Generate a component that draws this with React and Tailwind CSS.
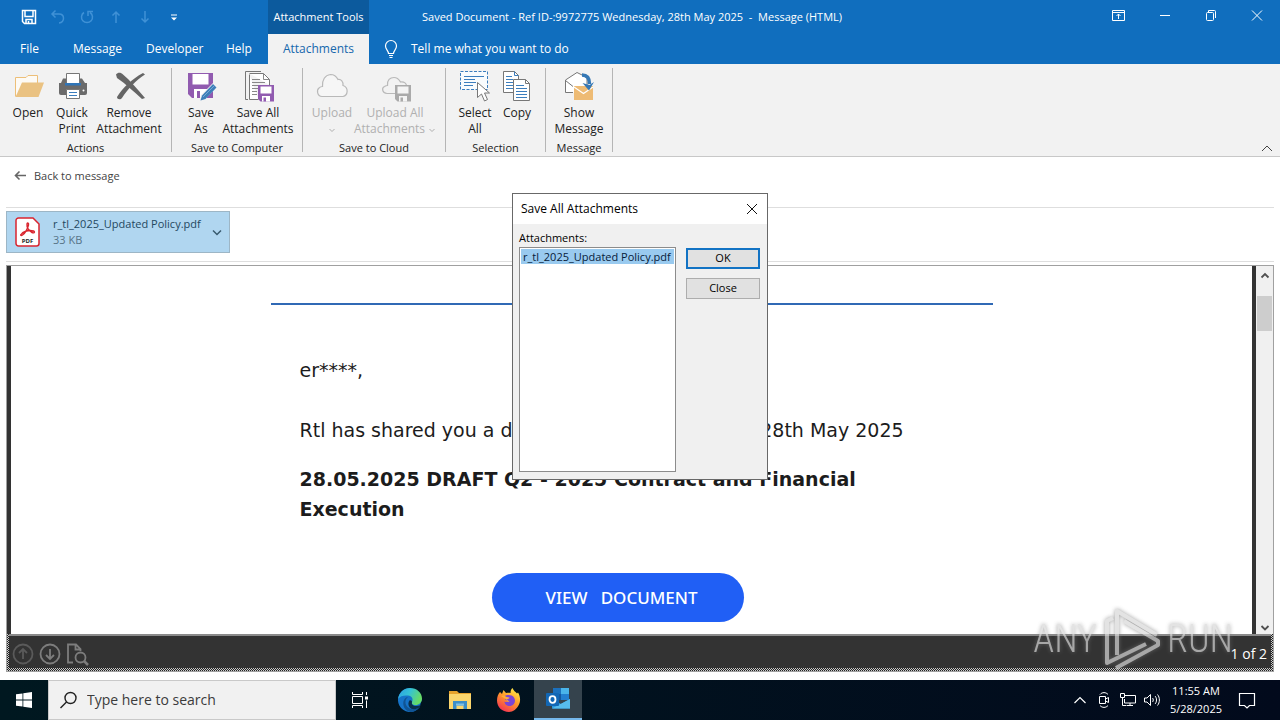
import React from 'react';

const FloppySmall = ({ x, y, color, paper = '#fff' }) => (
    <g transform={`translate(${x} ${y})`}>
        <path d="M0 0h16v16.5H2.5L0 14z" fill={color} />
        <path d="M2.5 1.5h11v7h-11z" fill={paper} />
        <path d="M4 11h8v5.5H4z" fill={paper} />
        <path d="M5.5 12.5H8v4H5.5z" fill={color} />
    </g>
);

const OpenIcon = () => (
    <svg className="size-8" viewBox="0 0 32 32" fill="none">
        <path d="M3.5 26.500V7.500H14l2-2h9.500v8" fill="#fdfaf5" stroke="#edbf78" />
        <path d="M10 12.500h22L26.500 27H3.500z" fill="#eac282" />
    </svg>
);

const PrinterIcon = () => (
    <svg className="size-8" viewBox="0 0 32 32" fill="none">
        <path d="M3 13h28v10a2 2 0 0 1-2 2H5a2 2 0 0 1-2-2z" fill="#6b6b6b" />
        <path d="M7 8.500h3V13H5z M22 8.500h4L29 13h-7z" fill="#6b6b6b" />
        <path d="M10.500 3.500h13V14h-13z" fill="#fff" stroke="#777" />
        <path d="M9 13h16v2.500H9z" fill="#2f75b8" />
        <path d="M10.500 19.500h13v9h-13z" fill="#fff" stroke="#777" />
        <path d="M13 22.500h8M13 25.500h8" stroke="#3b7dbd" />
        <circle cx="27.500" cy="20.500" r="1" fill="#fff" />
    </svg>
);

const RemoveIcon = () => (
    <svg className="size-8" viewBox="0 0 32 32">
        <path d="M3 4.500C5 2 8 2.500 10 4.500c7 6 14 14 22 23.500l-3 1C21 22 13 14 4 8z" fill="#656565" />
        <path d="M32 4.500C23 10.500 15 18.500 9 28c-1.500 2-5 1.500-5-1C10 17.500 19 9 30 3z" fill="#656565" />
    </svg>
);

const SaveAsIcon = () => (
    <svg className="size-8" viewBox="0 0 32 32">
        <path d="M3 3h25v25H7l-4-4z" fill="#915bb0" />
        <path d="M7.500 4h16v10.500h-16z" fill="#fff" />
        <path d="M9 19h13v9H9z" fill="#fff" />
        <path d="M12 21h3v7h-3z" fill="#915bb0" />
        <path d="M14 31.500l2-6.500L28.500 12.500l4 4L20 29z" fill="#f2f2f2" />
        <path d="M15.500 30.500l1.500-5L28 14l3.500 3.500L20.500 29z" fill="#3e7fb9" />
        <path d="M18 27L29 16" stroke="#76a9d4" />
    </svg>
);

const SaveAllIcon = () => (
    <svg className="size-8" viewBox="0 0 32 32" fill="none">
        <path d="M6 29.500H3.500v-28H19" stroke="#777" />
        <path d="M7.500 4.500v25h9M7.500 3.500h14l6 6V15" fill="#fff" stroke="#777" />
        <path d="M21.500 3.500v6h6M10 9.500h8M10 12.500h13M10 15.500h13M10 18.500h6M10 21.500h5M10 24.500h5" stroke="#888" />
        <FloppySmall x={16} y={15} color="#915bb0" />
    </svg>
);

const CloudIcon = () => (
    <svg className="size-8" viewBox="0 0 32 32" fill="none">
        <path
            d="M6 26.500C1 26 .5 20 3 18c1-1 2-1.500 3.500-1.500C6 10 9 5 14.500 4.500c4 0 6 2 7.500 5 3-.5 5.500 2 5 6 6 2 5 10 0 11z"
            fill="#f6f6f6"
            stroke="#b9b9b9"
            strokeWidth="1.200"
        />
    </svg>
);

const UploadAllIcon = () => (
    <svg className="size-8" viewBox="0 0 32 32" fill="none">
        <path
            d="M8 23.500C3 23 2.500 18 5.500 16.500c1-.7 1.500-1 3-1C8 10 11 7.500 15 7.500c4 0 5 2 6.500 4.500 4-.5 6 1.500 6 4"
            stroke="#b9b9b9"
            strokeWidth="1.200"
        />
        <path d="M8 23.500h9" stroke="#b9b9b9" />
        <FloppySmall x={16} y={15} color="#aaaaaa" paper="#f4f4f4" />
    </svg>
);

const SelectAllIcon = () => (
    <svg className="size-8" viewBox="0 0 32 32" fill="none">
        <path d="M1.500 1.500h27v18h-27z" fill="#f8fbfd" stroke="#3b7dbd" strokeDasharray="3 1.500" />
        <path d="M5 6.500h20M5 9.500h11M5 12.500h12M5 15.500h9" stroke="#3b7dbd" />
        <path d="M18.500 12.500v15l4-3.500 3 7 3-1.500-3-6.500h5z" fill="#fff" stroke="#777" />
    </svg>
);

const CopyIcon = () => (
    <svg className="size-8" viewBox="0 0 32 32" fill="none">
        <path d="M2.500 1.500h11l4 4v17h-15z" fill="#fff" stroke="#777" />
        <path d="M13.500 1.500v4h4M5 6.500h6M5 9.500h7M5 12.500h7M5 15.500h7M5 18.500h7" stroke="#3b7dbd" />
        <path d="M12.500 9.500h12l4 4v17h-16z" fill="#fff" stroke="#777" />
        <path d="M24.500 9.500v4h4" stroke="#777" />
        <path d="M15 15.500h8M15 18.500h11M15 21.500h11M15 24.500h11M15 27.500h11" stroke="#3b7dbd" />
    </svg>
);

const ShowMessageIcon = () => (
    <svg className="size-8" viewBox="0 0 32 32" fill="none">
        <path d="M10 22.500H2.500V10L14 2.500l10 5v12" fill="#fff" stroke="#777" />
        <path d="M2.500 10.500l7.500 6" stroke="#777" />
        <path d="M11 16h19v14H11z" fill="#eebb74" />
        <path d="M11 17l9.500 6.500L30 17" stroke="#fff" strokeWidth="1.200" />
        <path d="M19 5c5 0 7.500 3 7.500 9" stroke="#3678b5" strokeWidth="3.500" />
        <path d="M19.500 13l6.500 7.500 5-8.500-4.500 3z" fill="#3678b5" />
    </svg>
);

const Caret = () => (
    <svg className="inline-block h-2 w-2" viewBox="0 0 8 8" fill="none" stroke="currentColor">
        <path d="M1.500 3l2.500 2.500L6.500 3" />
    </svg>
);

const ribbon = [
    {
        name: 'Actions',
        pad: 'pl-1.5 pr-[7px]',
        items: [
            { lines: ['Open'], icon: <OpenIcon />, width: 'w-11' },
            { lines: ['Quick', 'Print'], icon: <PrinterIcon />, width: 'w-11' },
            { lines: ['Remove', 'Attachment'], icon: <RemoveIcon />, width: 'w-[70px]' },
        ],
    },
    {
        name: 'Save to Computer',
        pad: 'pl-2.5 pr-1.5',
        items: [
            { lines: ['Save', 'As'], icon: <SaveAsIcon />, width: 'w-[38px]' },
            { lines: ['Save All', 'Attachments'], icon: <SaveAllIcon />, width: 'w-[76px]' },
        ],
    },
    {
        name: 'Save to Cloud',
        pad: 'pl-1.5 pr-2.5',
        items: [
            { lines: ['Upload', ''], icon: <CloudIcon />, width: 'w-[46px]', disabled: true },
            { lines: ['Upload All', 'Attachments '], icon: <UploadAllIcon />, width: 'w-[80px]', disabled: true },
        ],
    },
    {
        name: 'Selection',
        pad: 'pl-2 pr-[7px]',
        items: [
            { lines: ['Select', 'All'], icon: <SelectAllIcon />, width: 'w-[42px]' },
            { lines: ['Copy'], icon: <CopyIcon />, width: 'w-[42px]' },
        ],
    },
    {
        name: 'Message',
        pad: 'px-1.5',
        items: [{ lines: ['Show', 'Message'], icon: <ShowMessageIcon />, width: 'w-[54px]' }],
    },
];

function TitleBar() {
    return (
        <header className="flex h-16 shrink-0 bg-[#106ebe] text-white">
            <div className="flex w-[268px] flex-col">
                <div className="flex h-[34px] items-center pl-[21px]">
                    <button aria-label="Save" className="mr-[13px]">
                        <svg className="size-4" viewBox="0 0 16 16" fill="none" stroke="#fff" strokeWidth="1.500">
                            <path d="M1.500 1.500h13v13h-11l-2-2z M4 2v5.500h8V2 M5 14.500V10.500h6v4" />
                            <path d="M7.500 12v2" />
                        </svg>
                    </button>
                    <button aria-label="Undo" className="mr-[13px] text-[#3f91d6]">
                        <svg className="size-4" viewBox="0 0 16 16" fill="none" stroke="currentColor" strokeWidth="1.500">
                            <path d="M5.500 1.500L2 5l3.500 3.500M2 5h7c6 0 6 8.500 0 9" />
                        </svg>
                    </button>
                    <button aria-label="Redo" className="mr-[13px] text-[#3f91d6]">
                        <svg className="size-4" viewBox="0 0 16 16" fill="none" stroke="currentColor" strokeWidth="1.500">
                            <path d="M5 3.500a5.500 5.500 0 1 0 6 0M9 7V2.500h5" />
                        </svg>
                    </button>
                    <button aria-label="Previous item" className="mr-[13px] text-[#3f91d6]">
                        <svg className="size-4" viewBox="0 0 16 16" fill="none" stroke="currentColor" strokeWidth="1.500">
                            <path d="M8 14V3M4.500 6.500L8 3l3.500 3.500" />
                        </svg>
                    </button>
                    <button aria-label="Next item" className="mr-[13px] text-[#3f91d6]">
                        <svg className="size-4" viewBox="0 0 16 16" fill="none" stroke="currentColor" strokeWidth="1.500">
                            <path d="M8 2v11M4.500 9.500L8 13l3.500-3.500" />
                        </svg>
                    </button>
                    <button aria-label="Customize toolbar">
                        <svg className="size-4" viewBox="0 0 16 16" fill="#fff">
                            <path d="M5 5.500h6v1H5zM5 8.500h6L8 11.500z" />
                        </svg>
                    </button>
                </div>
                <nav className="flex h-[30px] items-center pl-5 text-xs">
                    <button className="w-[53px] text-left">File</button>
                    <button className="w-[73px] text-left">Message</button>
                    <button className="w-20 text-left">Developer</button>
                    <button className="text-left">Help</button>
                </nav>
            </div>
            <div className="flex w-[101px] flex-col text-center text-xs">
                <div className="flex h-[34px] items-center justify-center bg-[#0c5a9d] text-[11px] whitespace-nowrap">
                    Attachment Tools
                </div>
                <button className="h-[30px] bg-[#f2f2f2] text-[#1668ad]">Attachments</button>
            </div>
            <div className="flex min-w-0 flex-1 flex-col">
                <div className="flex h-[34px] items-center pl-[53px]">
                    <h1 className="text-[11px] whitespace-pre">
                        {'Saved Document - Ref ID-:9972775 Wednesday, 28th May 2025  -  Message (HTML)'}
                    </h1>
                    <div className="ml-auto flex pr-[15px] pb-1">
                        <button aria-label="Ribbon display options" className="mr-[31px]">
                            <svg className="size-4" viewBox="0 0 16 16" fill="none" stroke="#fff">
                                <path d="M2.500 3.500h12v10h-12zM2.500 5.500h12M8.500 12V7M6.500 9l2-2 2 2" />
                            </svg>
                        </button>
                        <button aria-label="Minimize" className="mr-[30px]">
                            <svg className="size-4" viewBox="0 0 16 16" fill="none" stroke="#fff">
                                <path d="M3 8.500h10" />
                            </svg>
                        </button>
                        <button aria-label="Restore" className="mr-[30px]">
                            <svg className="size-4" viewBox="0 0 16 16" fill="none" stroke="#fff">
                                <rect x="3.500" y="5.500" width="7" height="8" rx="1" />
                                <path d="M5.500 5V3.500h6a1 1 0 0 1 1 1V11" />
                            </svg>
                        </button>
                        <button aria-label="Close window">
                            <svg className="size-4" viewBox="0 0 16 16" fill="none" stroke="#fff">
                                <path d="M3 3.500l10 10M13 3.500l-10 10" />
                            </svg>
                        </button>
                    </div>
                </div>
                <button className="flex h-[30px] items-center gap-3 pl-3.5 text-xs">
                    <svg className="h-5 w-4" viewBox="0 0 16 20" fill="none" stroke="#fff" strokeWidth="1.200">
                        <path d="M5.500 14.500c0-3-3-4-3-7.500a5.500 5.500 0 0 1 11 0c0 3.500-3 4.500-3 7.500zM6 16.500h4M6.500 18.500h3" />
                    </svg>
                    Tell me what you want to do
                </button>
            </div>
        </header>
    );
}

function Ribbon() {
    return (
        <div className="flex h-[93px] shrink-0 border-b border-[#c8c8c8] bg-[#f2f2f2] pt-1 pb-1 text-[#222]">
            {ribbon.map((group) => (
                <section key={group.name} className="flex flex-col border-r border-[#b5b5b5]">
                    <div className={`flex flex-1 items-start ${group.pad}`}>
                        {group.items.map((item) => (
                            <button
                                key={item.lines[0]}
                                disabled={item.disabled}
                                className={`flex flex-col items-center pt-0.5 text-xs leading-4 whitespace-nowrap disabled:text-[#b0b0b0] ${item.width}`}
                            >
                                {item.icon}
                                <span className="pt-[3px]">{item.lines[0]}</span>
                                <span>
                                    {item.lines[1]}
                                    {item.disabled && <Caret />}
                                </span>
                            </button>
                        ))}
                    </div>
                    <h2 className="text-center text-[11px] leading-2 whitespace-nowrap">{group.name}</h2>
                </section>
            ))}
            <button aria-label="Collapse the ribbon" className="mr-[5px] ml-auto self-end">
                <svg className="size-4" viewBox="0 0 16 16" fill="none" stroke="#444">
                    <path d="M3 15l5-5 5 5" />
                </svg>
            </button>
        </div>
    );
}

function AttachmentStrip() {
    return (
        <div className="mx-1.5 flex h-[54px] shrink-0 items-start border-b border-[#dedede] pt-[3px]">
            <button className="flex h-[42px] w-56 items-center border border-[#9db6c6] bg-[#b0d6f0] pr-1.5 pl-2 text-left">
                <svg className="h-[30px] w-[25px]" viewBox="0 0 25 30" fill="none">
                    <path
                        d="M3.500 1H18l6 6v19.500a2.500 2.500 0 0 1-2.500 2.500h-18A2.500 2.500 0 0 1 1 26.500v-23A2.500 2.500 0 0 1 3.500 1z"
                        fill="#fff"
                        stroke="#d9252f"
                        strokeWidth="1.500"
                    />
                    <path
                        d="M6 17.500c1.500-2.500 7-5 12.500-3.500 2 .8.500 2.500-1.500 1.500-3-1.500-5.500-5-5-8.500.3-1.800 2-1 1.500 1-1 4-4 8.500-6 10-1.200.8-2.300.5-1.500-.5z"
                        stroke="#d9252f"
                        strokeWidth="1.400"
                    />
                    <text x="12.500" y="26" textAnchor="middle" fontSize="6" fontWeight="700" fill="#222">
                        PDF
                    </text>
                </svg>
                <span className="ml-[13px] flex flex-1 flex-col text-[11px] leading-4 whitespace-nowrap text-[#24485f]">
                    r_tl_2025_Updated Policy.pdf
                    <span className="text-[#577487]">33 KB</span>
                </span>
                <svg className="h-3 w-3 shrink-0" viewBox="0 0 12 12" fill="none" stroke="#395a6e" strokeWidth="1.500">
                    <path d="M2 4.500l4 4 4-4" />
                </svg>
            </button>
        </div>
    );
}

function Preview() {
    return (
        <main className="mx-1.5 mt-[3px] flex min-h-0 flex-1 flex-col border border-[#a0a0a0] bg-[#333]">
            <div className="flex min-h-0 flex-1">
                <div className="min-w-0 flex-1 border-x-4 border-[#333] bg-white">
                    <article className="mx-auto mt-[37px] max-w-[722px] border-t-2 border-[#3069b5] pr-[57px] pl-[29px] font-['DejaVu_Sans',sans-serif] text-[#1c1c1c]">
                        <p className="mt-[50px] text-[19px] leading-[30px]">er****,</p>
                        <p className="mt-[30px] text-[19px] leading-[30px] whitespace-pre">
                            {'Rtl has shared you a document on  Wednesday, 28th May 2025'}
                        </p>
                        <h3 className="mt-[19px] text-[19px] leading-[30px] font-bold">
                            28.05.2025 DRAFT Q2 - 2025 Contract and Financial Execution
                        </h3>
                        <button className="mx-auto mt-[49px] block h-[49px] w-[252px] rounded-full bg-[#205ff5] pl-2 font-['Noto_Sans',sans-serif] text-[17px] font-medium whitespace-pre text-white">
                            {'VIEW   DOCUMENT'}
                        </button>
                    </article>
                </div>
                <div className="flex w-[17px] flex-col items-center bg-[#f0f0f0]">
                    <button aria-label="Scroll up" className="flex h-[30px] items-start pt-1">
                        <svg className="size-3" viewBox="0 0 12 12" fill="none" stroke="#505050" strokeWidth="1.800">
                            <path d="M2.500 7.500L6 4l3.500 3.500" />
                        </svg>
                    </button>
                    <div className="h-[35px] w-[15px] bg-[#cdcdcd]" />
                    <button aria-label="Scroll down" className="mt-auto">
                        <svg className="size-3" viewBox="0 0 12 12" fill="none" stroke="#505050" strokeWidth="1.800">
                            <path d="M2.500 4L6 7.500 9.500 4" />
                        </svg>
                    </button>
                </div>
            </div>
            <footer className="h-[37px] shrink-0 bg-[repeating-conic-gradient(#222_0_25%,#ccc_0_50%)] bg-[length:2px_2px] px-0.5 pb-[3px]">
                <div className="flex h-full items-center gap-0.5 border-t-2 border-[#8a8a8a] bg-[#333] pt-1 pr-1 pl-0.5 text-white">
                    <button aria-label="Previous page" className="mr-px text-[#5a5a5a]">
                        <svg className="size-6" viewBox="0 0 24 24" fill="none" stroke="currentColor" strokeWidth="1.800">
                            <circle cx="12" cy="12" r="9.500" />
                            <path d="M12 17V7M8 11l4-4 4 4" />
                        </svg>
                    </button>
                    <button aria-label="Next page" className="mr-px text-[#7d7d7d]">
                        <svg className="size-6" viewBox="0 0 24 24" fill="none" stroke="currentColor" strokeWidth="1.800">
                            <circle cx="12" cy="12" r="9.500" />
                            <path d="M12 7v10M8 13l4 4 4-4" />
                        </svg>
                    </button>
                    <button aria-label="Find in document" className="text-[#7d7d7d]">
                        <svg className="size-6" viewBox="0 0 24 24" fill="none" stroke="currentColor" strokeWidth="1.800">
                            <path d="M8 20.500H3V2.500h8l4.500 4.500v2M10.500 3v4.500h5" />
                            <circle cx="15.500" cy="15.500" r="5" />
                            <path d="M19 19l4 4" strokeWidth="2.500" />
                        </svg>
                    </button>
                    <span className="ml-auto text-sm">1 of 2</span>
                </div>
            </footer>
        </main>
    );
}

function SaveDialog() {
    return (
        <div
            role="dialog"
            aria-labelledby="dialog-title"
            className="absolute top-[193px] left-1/2 w-64 -translate-x-1/2 border border-[#686868] bg-[#f0f0f0] text-xs text-black"
        >
            <div className="flex h-[30px] items-center justify-between bg-white px-2">
                <h2 id="dialog-title">Save All Attachments</h2>
                <button aria-label="Close dialog">
                    <svg className="size-3.5" viewBox="0 0 14 14" fill="none" stroke="#111">
                        <path d="M2 2l10 10M12 2L2 12" />
                    </svg>
                </button>
            </div>
            <div className="pt-1.5 pr-[7px] pb-[7px] pl-1.5">
                <span id="list-label" className="block text-[11px] leading-4">Attachments:</span>
                <div className="flex items-start gap-2.5 pt-px">
                    <ul
                        role="listbox"
                        aria-labelledby="list-label"
                        className="h-[225px] w-[157px] border border-[#8c8c8c] bg-white p-px"
                    >
                        <li
                            role="option"
                            aria-selected="true"
                            className="bg-[#99caef] pl-0.5 text-[11px] leading-[15px] whitespace-nowrap text-[#06203a]"
                        >
                            r_tl_2025_Updated Policy.pdf
                        </li>
                    </ul>
                    <div className="flex flex-1 flex-col gap-[9px] pt-px">
                        <button className="h-[21px] border-2 border-[#1273c4] bg-[#e1e1e1] text-[11px]">OK</button>
                        <button className="h-[21px] border border-[#adadad] bg-[#e1e1e1] text-[11px]">Close</button>
                    </div>
                </div>
            </div>
        </div>
    );
}

function Watermark() {
    return (
        <div
            aria-hidden="true"
            className="pointer-events-none absolute right-[47px] bottom-[46px] flex h-[70px] items-center gap-1.5 font-['Roboto_Condensed','Liberation_Sans_Narrow',Roboto,sans-serif] text-[38px] font-light text-[#d8d8d8] opacity-70 drop-shadow-[0_0_2px_#777]"
        >
            <span>ANY</span>
            <svg className="h-[66px] w-[58px]" viewBox="0 0 58 66" fill="none" stroke="currentColor" strokeWidth="4" strokeLinejoin="round">
                <path d="M14 49V5L54 29" />
                <path d="M10 12L4 15V57L43 38" />
                <path d="M13 62L55 39V35L21 15" />
            </svg>
            <span>RUN</span>
        </div>
    );
}

function Taskbar() {
    return (
        <div className="flex h-10 shrink-0 bg-linear-to-r from-[#001820] to-[#020a1c] font-['Open_Sans',sans-serif] text-white">
            <button aria-label="Start" className="flex w-12 items-center justify-center">
                <svg className="size-4" viewBox="0 0 16 16" fill="#fff">
                    <path d="M0 2.300l6.500-.9v6.200H0zM7.300 1.300L16 0v7.600H7.300zM0 8.400h6.500v6.200L0 13.700zM7.300 8.400H16V16l-8.700-1.300z" />
                </svg>
            </button>
            <label className="flex w-72 items-center border border-[#c9c9c9] bg-[#f1f1f1] pl-2.5">
                <svg className="size-5" viewBox="0 0 20 20" fill="none" stroke="#222" strokeWidth="1.400">
                    <circle cx="11.500" cy="8" r="5.500" />
                    <path d="M7.500 12L1.500 18" />
                </svg>
                <input
                    type="text"
                    aria-label="Search"
                    placeholder="Type here to search"
                    className="min-w-0 flex-1 bg-transparent pl-2 text-sm outline-none placeholder:text-[#3b3b3b]"
                />
            </label>
            <div className="flex gap-px">
                <button aria-label="Task view" className="flex w-12 items-center justify-center">
                    <svg className="size-[18px]" viewBox="0 0 18 18" fill="none" stroke="#fff">
                        <path d="M1.500 1v2.500h10V1M1.500 5.500h10v7h-10zM1.500 17v-2.500h10V17M15.500 1v3M15.500 9.500V17" />
                        <path d="M14 5.500h3v3h-3z" fill="#fff" stroke="none" />
                    </svg>
                </button>
                <button aria-label="Edge" className="flex w-[50px] items-center justify-center">
                    <svg className="size-6" viewBox="0 0 24 24">
                        <defs>
                            <linearGradient id="edge-top" x1="0" y1="0" x2="1" y2="0.400">
                                <stop offset="0" stopColor="#2b9ee5" />
                                <stop offset="0.500" stopColor="#35c2d5" />
                                <stop offset="1" stopColor="#66db67" />
                            </linearGradient>
                        </defs>
                        <path d="M12 0a12 12 0 1 0 9.500 19.300L24 11z" fill="#1674c9" />
                        <path d="M0 11C1 4.500 6 0 12 0c7 0 12 5 12 10.500 0 4-3 6.500-6.500 6.500-3 0-4.500-1.500-3.500-3 1.500-3 0-6-4-6.500C6 7 2 8 0 11z" fill="url(#edge-top)" />
                        <path d="M10 9c-4 3-3.500 10 3 12 3 .8 6 .2 8.500-2-2 3.500-5.500 5-9 5C6 23 4 16 6 12c1-2 2.500-3 4-3z" fill="#105494" />
                        <path d="M14 14c-1 3 2.500 5.500 9 3l-1.500 2.500c-2 1.200-4 1.800-6 1.800-4.500-.5-6.500-5.500-4-8.800 1.500-.5 2.500.5 2.500 1.500z" fill="#0a2f4c" />
                    </svg>
                </button>
                <button aria-label="File Explorer" className="flex w-12 items-center justify-center">
                    <svg className="size-6" viewBox="0 0 24 24">
                        <path d="M1 3h8l2 2h12v6H1z" fill="#e7a32c" />
                        <path d="M1 6h22v15H1z" fill="#fbd66d" />
                        <path d="M5 13h14v8h-3.500v-3.500h-7V21H5z" fill="#3d8fc9" />
                        <path d="M8 15.500h8v2H8z" fill="#7fc0e6" />
                    </svg>
                </button>
                <button aria-label="Firefox" className="flex w-12 items-center justify-center">
                    <svg className="size-6" viewBox="0 0 24 24">
                        <defs>
                            <linearGradient id="fox" x1="0.800" y1="0" x2="0.200" y2="1">
                                <stop offset="0" stopColor="#fff04a" />
                                <stop offset="0.450" stopColor="#ff9a2a" />
                                <stop offset="1" stopColor="#f52a56" />
                            </linearGradient>
                        </defs>
                        <path d="M3 4l2 2 1.500-4L9 5c2-.5 3-.5 4.500 0 0-2 .5-4 2-5 1 3 3 3.500 4.500 5.500l1-1c2 3 3 8 1 12C20 21 16 24 12 24 5 24 0 19 0 12.500 0 9 1 6 3 4z" fill="url(#fox)" />
                        <path d="M8 8c2-1.500 7-1.500 9 1.500s1 7.500-3.500 8.500c-3 .5-6-1.500-6-4.500 1.500 1 3 .5 4-.5-2 0-4-1-3.500-5z" fill="#7b45d6" />
                        <path d="M4 8c2-1 4-.5 5.500 1l3 .5c0 1.500-3 1.500-3 3 0 1 1.500 1.500 3 1" fill="#ffae36" />
                    </svg>
                </button>
                <button aria-label="Outlook" className="flex w-12 items-center justify-center border-b-2 border-[#76b9ed] bg-[#35434d]">
                    <svg className="size-6" viewBox="0 0 24 24">
                        <path d="M7 1h16v12H7z" fill="#1b70bd" />
                        <path d="M15 1h8v6h-8z" fill="#4ab4ea" />
                        <path d="M7 7h8v6H7z" fill="#1459a0" />
                        <path d="M15 7h8v6h-8z" fill="#237fd0" />
                        <path d="M6 12l9 5 9-5v9.500H6z" fill="#2a9ae0" />
                        <path d="M6 21.500L24 12v9.500z" fill="#57bced" />
                        <rect y="6" width="13" height="13" rx="1" fill="#1267b5" />
                        <ellipse cx="6.500" cy="12.500" rx="3" ry="3.300" fill="none" stroke="#fff" strokeWidth="1.800" />
                    </svg>
                </button>
            </div>
            <div className="ml-auto flex items-center pr-6">
                <button aria-label="Show hidden icons" className="mr-2">
                    <svg className="size-4" viewBox="0 0 16 16" fill="none" stroke="#fff" strokeWidth="1.200">
                        <path d="M2.500 11L8 5.500l5.500 5.500" />
                    </svg>
                </button>
                <svg className="mr-2 size-4" viewBox="0 0 16 16" fill="none" stroke="#fff">
                    <path d="M4 2.500C6 0 10 0 12 2.500M4 13.500c2 2.500 6 2.500 8 0M3.500 4.500h6v7h-6zM9.500 7l3-1.500v5l-3-1.500" />
                </svg>
                <svg className="mr-2 size-4" viewBox="0 0 16 16" fill="none" stroke="#fff">
                    <path d="M5 3.500h10.500v7.500H4.500V7M.5 1.500h4v4h-4zM2.500 5.500v8h4M10 11v2.500M7 13.500h6" />
                </svg>
                <svg className="mr-2.5 size-4" viewBox="0 0 16 16" fill="none" stroke="#fff">
                    <path d="M.5 6v4h2.500l3.500 3.500v-11L3 6zM8.500 6c1 1 1 3 0 4M11 4c2 2 2 6 0 8M13.500 2.500c2.500 3 2.500 8 0 11" />
                </svg>
                <div className="mr-4 text-center text-[11px] leading-[18px] whitespace-nowrap">
                    <div>11:55 AM</div>
                    <div>5/28/2025</div>
                </div>
                <button aria-label="Notifications">
                    <svg className="size-[18px]" viewBox="0 0 18 18" fill="none" stroke="#fff" strokeWidth="1.200">
                        <path d="M1.500 2.500h15v12h-5l-2.500 2.500-2.500-2.500h-5z" />
                    </svg>
                </button>
            </div>
        </div>
    );
}

export default function App() {
    return (
        <div className="relative flex h-screen flex-col overflow-hidden bg-white font-['Open_Sans','Noto_Sans',sans-serif]">
            <TitleBar />
            <Ribbon />
            <div className="mx-1.5 h-[51px] shrink-0 border-b border-[#dedede] pt-2.5 pl-2">
                <a href="#message" className="flex items-center gap-2 text-[11px] leading-[18px] text-[#444]">
                    <svg className="size-3" viewBox="0 0 12 12" fill="none" stroke="#666" strokeWidth="1.600">
                        <path d="M12 5.500H1.500M5.500 1.500l-4 4 4 4" />
                    </svg>
                    Back to message
                </a>
            </div>
            <AttachmentStrip />
            <Preview />
            <div className="h-2 shrink-0" />
            <Taskbar />
            <Watermark />
            <SaveDialog />
        </div>
    );
}
